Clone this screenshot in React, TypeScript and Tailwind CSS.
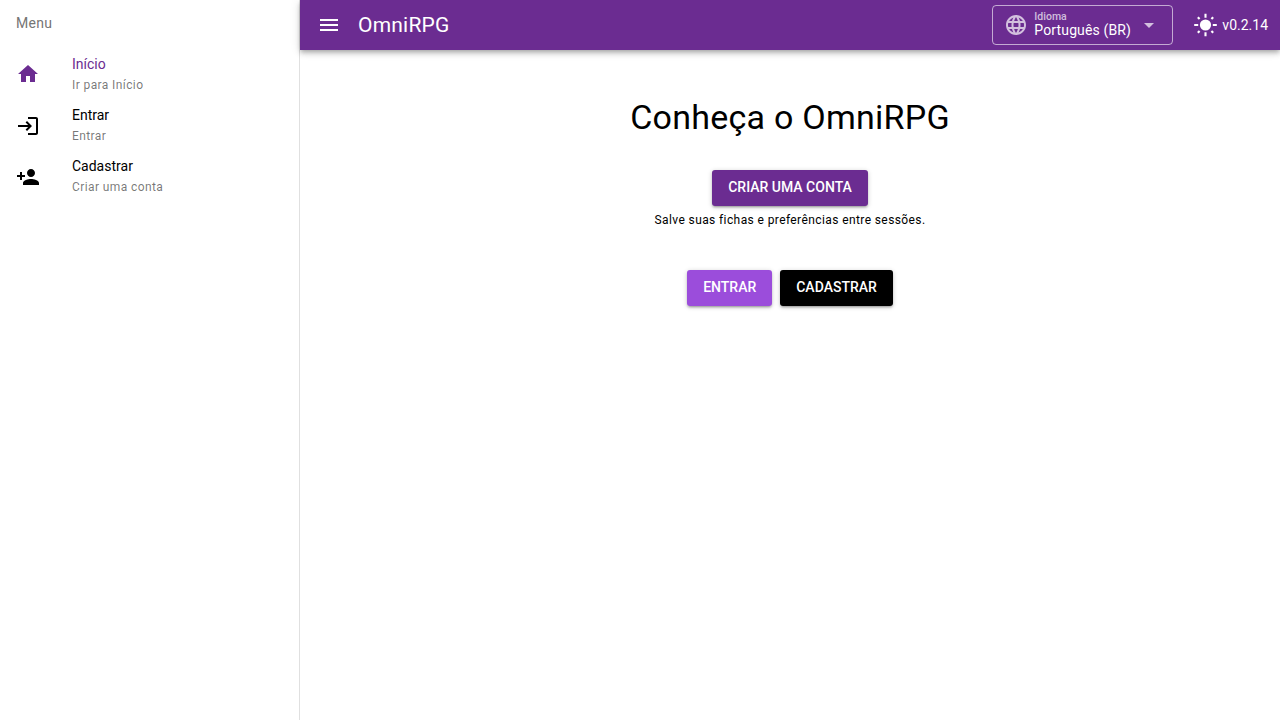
import React from "react";
import clsx from "clsx";
import {
  MdArrowDropDown,
  MdHome,
  MdLanguage,
  MdLogin,
  MdMenu,
  MdPersonAdd,
} from "react-icons/md";

const menuItems = [
  { title: "Início", caption: "Ir para Início", icon: MdHome, active: true },
  { title: "Entrar", caption: "Entrar", icon: MdLogin, active: false },
  {
    title: "Cadastrar",
    caption: "Criar uma conta",
    icon: MdPersonAdd,
    active: false,
  },
];

const SunIcon = () => (
  <svg viewBox="0 0 24 24" className="size-6" fill="none">
    <circle cx="11.5" cy="12" r="5.6" fill="currentColor" />
    <path
      d="M0.2 12h4M18.8 12h4M11.5 0.8v4M11.5 19.2v4M3.8 4.3l1.8 1.8M19.2 4.3l-1.8 1.8M3.8 19.7l1.8-1.8M19.2 19.7l-1.8-1.8"
      stroke="currentColor"
      strokeWidth="2.1"
    />
  </svg>
);

const Button = ({ label, className }: { label: string; className: string }) => (
  <button
    type="button"
    className={clsx(
      "flex h-9 items-center justify-center rounded-[3px] px-4 pb-0.5 text-sm font-medium uppercase leading-6 text-white shadow-[0_1px_5px_rgba(0,0,0,0.2),0_2px_2px_rgba(0,0,0,0.14),0_3px_1px_-2px_rgba(0,0,0,0.12)]",
      className
    )}
  >
    {label}
  </button>
);

const Sidebar = () => (
  <aside className="w-[300px] shrink-0 border-r border-black/12">
    <p className="px-4 pt-[15px] pb-[17px] text-sm leading-[1.2] tracking-[0.01786em] text-[#757575]">
      Menu
    </p>
    <ul>
      {menuItems.map(({ title, caption, icon: Icon, active }) => (
        <li
          key={title}
          className={clsx(
            "flex items-center px-4 py-2",
            active ? "text-[#6b2c91]" : "text-black"
          )}
        >
          <div className="w-14 shrink-0">
            <Icon className="size-6" />
          </div>
          <div>
            <p className="text-sm leading-[15px]">{title}</p>
            <p className="mt-[5.8px] text-xs leading-[1.2] tracking-[0.03333em] text-black/54">
              {caption}
            </p>
          </div>
        </li>
      ))}
    </ul>
  </aside>
);

const Header = () => (
  <header className="flex h-[50px] items-center bg-[#6b2c91] px-3 text-white shadow-[0_2px_4px_-1px_rgba(0,0,0,0.2),0_4px_5px_rgba(0,0,0,0.14),0_1px_10px_rgba(0,0,0,0.12)]">
    <button type="button" className="ml-[5px]">
      <MdMenu className="size-6" />
    </button>
    <h1 className="ml-[17px] flex-1 pt-0.5 text-[21px] leading-normal tracking-[0.01em]">
      OmniRPG
    </h1>
    <div className="flex h-10 w-[181px] items-center rounded border border-white/60 px-[11px]">
      <MdLanguage className="size-6 text-white/70" />
      <div className="ml-[6px] flex-1">
        <p className="text-[10.5px] font-medium leading-[12px] text-white/70">
          Idioma
        </p>
        <p className="pb-0.5 text-sm leading-[14px] tracking-[0.00937em]">
          Português (BR)
        </p>
      </div>
      <MdArrowDropDown className="size-6 text-white/70" />
    </div>
    <div className="ml-[21px] flex items-center gap-1 text-sm">
      <SunIcon />
      <span>v0.2.14</span>
    </div>
  </header>
);

export default function App() {
  return (
    <div className="flex h-screen overflow-hidden bg-white font-['Roboto',sans-serif] text-black">
      <Sidebar />
      <div className="flex flex-1 flex-col">
        <Header />
        <main className="flex flex-col items-center pt-[47px]">
          <h4 className="text-[34px] leading-10 tracking-[0.00735em]">
            Conheça o OmniRPG
          </h4>
          <Button label="Criar uma conta" className="mt-[33px] bg-[#6b2c91]" />
          <p className="mt-1 text-xs leading-5 tracking-[0.03333em]">
            Salve suas fichas e preferências entre sessões.
          </p>
          <div className="mt-10 flex gap-2">
            <Button label="Entrar" className="bg-[#9b4ddb]" />
            <Button label="Cadastrar" className="bg-black" />
          </div>
        </main>
      </div>
    </div>
  );
}
